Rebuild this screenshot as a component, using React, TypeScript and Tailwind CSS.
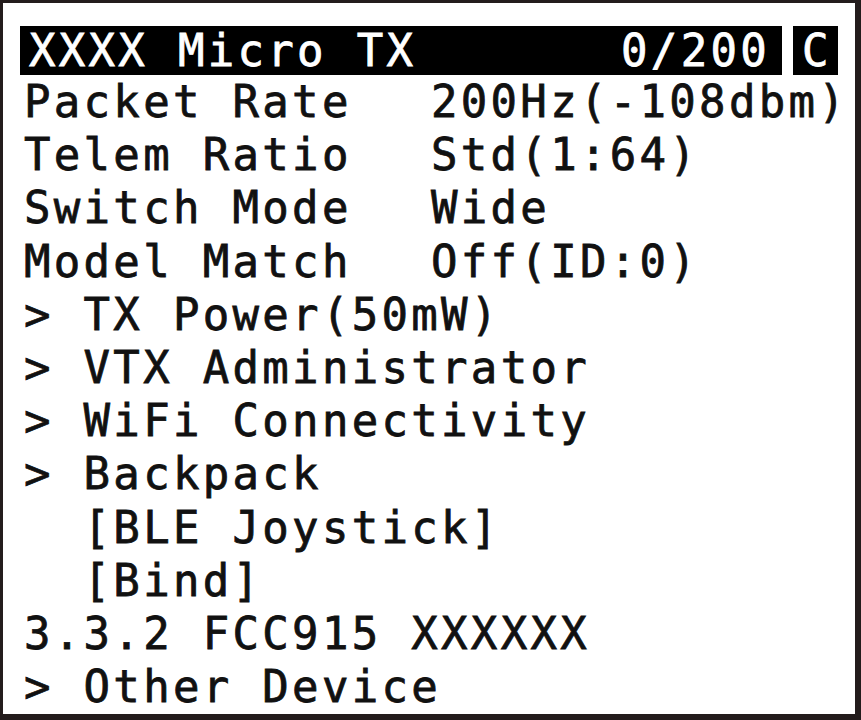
import React from "react";

const rows: { label: string; value?: string }[] = [
  { label: "Packet Rate", value: "200Hz(-108dbm)" },
  { label: "Telem Ratio", value: "Std(1:64)" },
  { label: "Switch Mode", value: "Wide" },
  { label: "Model Match", value: "Off(ID:0)" },
  { label: "> TX Power(50mW)" },
  { label: "> VTX Administrator" },
  { label: "> WiFi Connectivity" },
  { label: "> Backpack" },
  { label: "  [BLE Joystick]" },
  { label: "  [Bind]" },
  { label: "3.3.2 FCC915 XXXXXX" },
  { label: "> Other Device" },
];

export default function App() {
  return (
    <div
      className="w-[861px] h-[720px] box-border bg-white border-l-[3px] border-t-[3px] border-r-[6px] border-b-[6px] border-[#231c1c] pt-[23px] text-[#111] overflow-hidden [-webkit-text-stroke:0.8px_currentColor]"
      style={{ fontFamily: '"DejaVu Sans Mono", monospace' }}
    >
      <div className="flex ml-[17px] h-[49px] text-[44px] leading-[49px] tracking-[3.3px] whitespace-pre">
        <div className="w-[762px] bg-black text-white flex justify-between pl-[9px] pr-[12px]">
          <span>XXXX Micro TX</span>
          <span>0/200</span>
        </div>
        <div className="ml-[11px] w-[45px] bg-black text-white flex justify-center pl-[3px]">C</div>
      </div>
      <div className="pl-[21px] text-[44px] leading-[53.2px] tracking-[3.3px] whitespace-pre">
        {rows.map((r, i) => (
          <div key={i} className="flex h-[53.2px]">
            <span className={r.value ? "w-[407px]" : ""}>{r.label}</span>
            {r.value && <span>{r.value}</span>}
          </div>
        ))}
      </div>
    </div>
  );
}
